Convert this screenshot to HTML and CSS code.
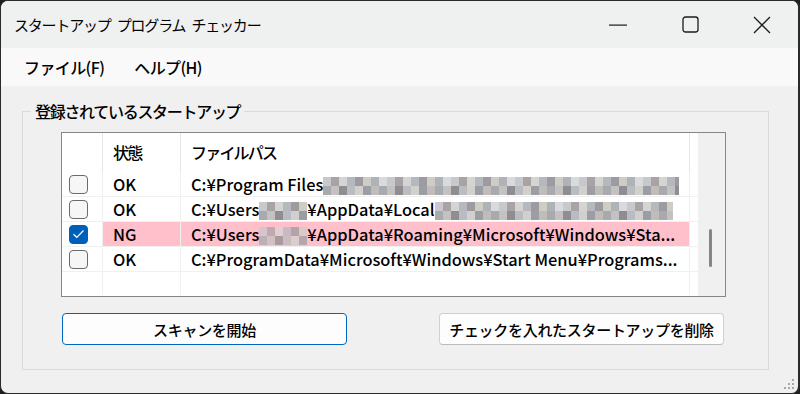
FILE: index.html
```html
<!DOCTYPE html>
<html lang="ja">
<head>
    <meta charset="UTF-8">
    <title>スタートアップ プログラム チェッカー</title>
    <link rel="stylesheet" href="styles.css">
</head>
<body>
    <div class="window">
        <div class="titlebar">
            <span class="title">スタートアップ プログラム チェッカー</span>
            <div class="controls">
                <div class="ctl">
                    <svg width="18" height="2" viewBox="0 0 18 2"><rect x="0" y="0.5" width="18" height="1.2" fill="#1b1b1b"/></svg>
                </div>
                <div class="ctl">
                    <svg width="17" height="17" viewBox="0 0 17 17"><rect x="1" y="1" width="15" height="15" rx="2.5" fill="none" stroke="#1b1b1b" stroke-width="1.3"/></svg>
                </div>
                <div class="ctl">
                    <svg width="18" height="18" viewBox="0 0 18 18"><path d="M1 1 L17 17 M17 1 L1 17" stroke="#1b1b1b" stroke-width="1.3" fill="none"/></svg>
                </div>
            </div>
        </div>

        <div class="menubar">
            <span class="menu-item">ファイル(F)</span>
            <span class="menu-item">ヘルプ(H)</span>
        </div>

        <div class="content">
            <fieldset class="group">
                <legend>登録されているスタートアップ</legend>
                <div class="group-inner">
                    <div class="listview">
                        <div class="list-body">
                            <div class="row header">
                                <div class="cell"></div>
                                <div class="cell">状態</div>
                                <div class="cell">ファイルパス</div>
                                <div class="cell"></div>
                            </div>
                            <div class="row">
                                <div class="cell check-cell"><span class="checkbox"></span></div>
                                <div class="cell">OK</div>
                                <div class="cell path">C:¥Program Files<span class="blur blur-long"></span></div>
                                <div class="cell"></div>
                            </div>
                            <div class="row">
                                <div class="cell check-cell"><span class="checkbox"></span></div>
                                <div class="cell">OK</div>
                                <div class="cell path">C:¥Users<span class="blur blur-user"></span>¥AppData¥Local<span class="blur blur-mid"></span></div>
                                <div class="cell"></div>
                            </div>
                            <div class="row ng">
                                <div class="cell check-cell"><span class="checkbox checked">
                                    <svg width="13" height="10" viewBox="0 0 13 10"><path d="M1.5 5.2 L4.8 8.3 L11.5 1.5" fill="none" stroke="#fff" stroke-width="1.2"/></svg>
                                </span></div>
                                <div class="cell">NG</div>
                                <div class="cell path">C:¥Users<span class="blur blur-user pinkish"></span>¥AppData¥Roaming¥Microsoft¥Windows¥Sta...</div>
                                <div class="cell"></div>
                            </div>
                            <div class="row">
                                <div class="cell check-cell"><span class="checkbox"></span></div>
                                <div class="cell">OK</div>
                                <div class="cell path">C:¥ProgramData¥Microsoft¥Windows¥Start Menu¥Programs...</div>
                                <div class="cell"></div>
                            </div>
                            <div class="row empty">
                                <div class="cell"></div>
                                <div class="cell"></div>
                                <div class="cell"></div>
                                <div class="cell"></div>
                            </div>
                        </div>
                        <div class="scrollbar"><div class="thumb"></div></div>
                    </div>

                    <div class="buttons">
                        <button class="btn default">スキャンを開始</button>
                        <button class="btn">チェックを入れたスタートアップを削除</button>
                    </div>
                </div>
            </fieldset>
        </div>

        <svg class="grip" width="14" height="14" viewBox="0 0 14 14">
            <rect x="11" y="1" width="2" height="2" fill="#a8a8a8"/>
            <rect x="7" y="5" width="2" height="2" fill="#a8a8a8"/>
            <rect x="11" y="5" width="2" height="2" fill="#a8a8a8"/>
            <rect x="3" y="9" width="2" height="2" fill="#a8a8a8"/>
            <rect x="7" y="9" width="2" height="2" fill="#a8a8a8"/>
            <rect x="11" y="9" width="2" height="2" fill="#a8a8a8"/>
        </svg>
    </div>
</body>
</html>
```

FILE: styles.css
```css
body {
    margin: 0;
    background: #1e1e1e;
    font-family: 'Noto Sans CJK JP', 'Noto Sans', sans-serif;
    color: #000;
}

.window {
    position: relative;
    box-sizing: border-box;
    width: 800px;
    height: 394px;
    border: 1px solid #2a2a2a;
    border-right-width: 2px;
    border-radius: 8px;
    background: #f0f0f0;
    overflow: hidden;
    display: flex;
    flex-direction: column;
}

/* title bar */
.titlebar {
    height: 47px;
    background: #eef1f0;
    display: flex;
    align-items: center;
    justify-content: space-between;
}

.title {
    margin-left: 13px;
    font-size: 15px;
    letter-spacing: -1.2px;
    word-spacing: 4px;
}

.controls {
    display: flex;
    height: 100%;
}

.ctl {
    width: 72px;
    height: 100%;
    display: flex;
    align-items: center;
    justify-content: center;
}

/* menu */
.menubar {
    height: 38px;
    background: #f9f9f9;
    display: flex;
    align-items: center;
    padding-left: 23px;
    gap: 30px;
}

.menu-item {
    font-size: 16px;
    font-weight: 500;
    letter-spacing: -0.6px;
}

/* group box */
.content {
    flex: 1;
    padding-top: 14px;
}

.group {
    margin: 0 29px 0 21px;
    padding: 0 8px;
    border: 1px solid #dadada;
    min-width: 0;
}

.group legend {
    padding: 0 4px;
    font-size: 16px;
    line-height: 22px;
    font-weight: 500;
    letter-spacing: -1.3px;
}

.group-inner {
    padding: 10px 34px 24px 30px;
}

/* list view */
.listview {
    display: flex;
    height: 163px;
    border: 1px solid #868686;
    background: #fff;
}

.list-body {
    flex: 1;
    overflow: hidden;
}

.row {
    display: grid;
    grid-template-columns: 41px 78px 509px 1fr;
    height: 25px;
    font-size: 16.4px;
    font-weight: 500;
    line-height: 25px;
}

.row .cell {
    border-right: 1px solid #f0f0f0;
    border-bottom: 1px solid #f0f0f0;
    padding-left: 10px;
    white-space: nowrap;
    overflow: hidden;
}

.row .cell:last-child {
    border-right: none;
}

.row.header {
    height: 39px;
    line-height: 39px;
    font-size: 16px;
    letter-spacing: -1.8px;
}

.row.header .cell {
    border-bottom: none;
    border-right-color: #e5e5e5;
}

.row .check-cell {
    padding-left: 7px;
    display: flex;
    align-items: center;
}

.row.ng .cell:not(.check-cell) {
    background: #ffc0cb;
}

.row.ng .cell:last-child {
    background: #fff;
}

.row.empty {
    height: 23px;
}

.row.empty .cell {
    border-bottom: none;
}

.checkbox {
    box-sizing: border-box;
    width: 19px;
    height: 19px;
    border: 1px solid #6b6b6b;
    border-radius: 4px;
    background: #f6f6f6;
    display: flex;
    align-items: center;
    justify-content: center;
}

.checkbox.checked {
    border-color: #005fb8;
    background: #005fb8;
}

/* pixelated (hidden) parts of paths */
.blur {
    display: inline-block;
    height: 18px;
    vertical-align: -4px;
    background-image:
        repeating-linear-gradient(90deg, #c9c8cc 0 8px, #a9a3a6 8px 16px, #d6d4d2 16px 24px, #b6b8bf 24px 32px, #9d9aa0 32px 40px, #cfccc6 40px 48px, #adb3b7 48px 56px, #d9dadd 56px 64px),
        repeating-linear-gradient(90deg, #a9aaae 0 8px, #c4c2c0 8px 16px, #8f8c92 16px 24px, #b9bcc0 24px 32px, #d2d0cc 32px 40px, #9b9ea3 40px 48px, #c0bcba 48px 56px);
    background-size: 100% 9px, 100% 9px;
    background-position: 0 0, 0 9px;
    background-repeat: no-repeat;
}

.blur-long {
    width: 356px;
}

.blur-user {
    width: 48px;
}

.blur-mid {
    width: 238px;
}

.blur.pinkish {
    opacity: 0.75;
}

.scrollbar {
    width: 27px;
    background: #f0f0f0;
    position: relative;
}

.thumb {
    position: absolute;
    left: 11px;
    top: 96px;
    width: 3px;
    height: 38px;
    border-radius: 2px;
    background: #858585;
}

/* buttons */
.buttons {
    display: flex;
    justify-content: space-between;
    padding: 16px 2px 0 1px;
}

.btn {
    width: 285px;
    height: 32px;
    border: 1px solid #d0d0d0;
    border-bottom-color: #bcbcbc;
    border-radius: 4px;
    background: #fdfdfd;
    font-family: 'Noto Sans CJK JP', 'Noto Sans', sans-serif;
    font-size: 15px;
    font-weight: 500;
    color: #000;
    padding: 0;
    letter-spacing: -0.3px;
}

.btn.default {
    border: 1px solid #0067c0;
    box-shadow: inset 0 0 0 1px #fdfdfd;
}

.grip {
    position: absolute;
    right: 3px;
    bottom: 1px;
}
```
